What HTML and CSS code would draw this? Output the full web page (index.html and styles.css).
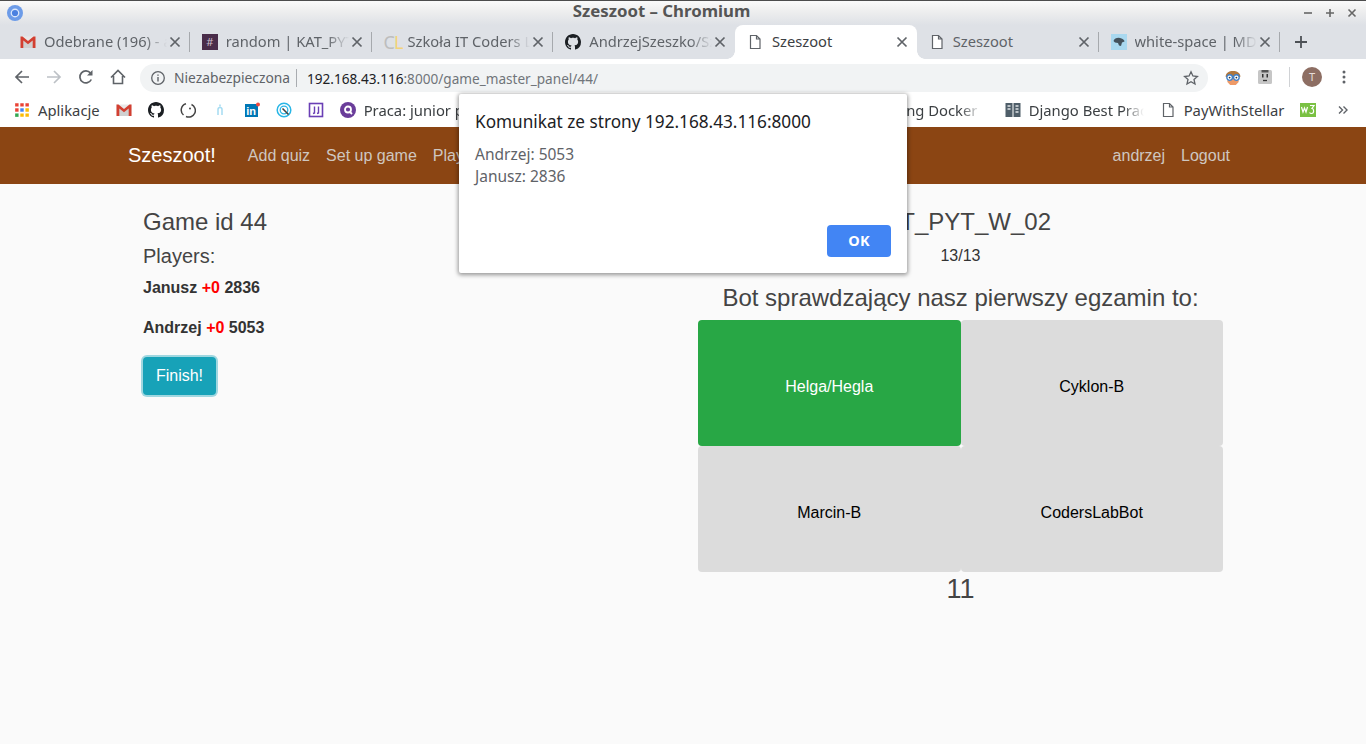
FILE: index.html
```html
<!DOCTYPE html>
<html lang="en">
<head>
  <meta charset="UTF-8">
  <title>Szeszoot - Chromium</title>
  <link rel="stylesheet" href="styles.css">
</head>
<body>
  <svg class="sprite" xmlns="http://www.w3.org/2000/svg">
    <symbol id="i-close" viewBox="0 0 16 16"><path d="M3.5 3.5l9 9M12.5 3.5l-9 9" fill="none" stroke="#5f6368" stroke-width="1.7"/></symbol>
    <symbol id="i-doc" viewBox="0 0 16 16"><path d="M3.5 1.5h6l3.5 3.5v9.5H3.5zM9.5 1.5V5H13" fill="#fff" stroke="#5f6368" stroke-width="1.2"/></symbol>
    <symbol id="i-github" viewBox="0 0 16 16"><path fill="#1b1f23" d="M8 0C3.58 0 0 3.58 0 8c0 3.54 2.29 6.53 5.47 7.59.4.07.55-.17.55-.38 0-.19-.01-.82-.01-1.49-2.01.37-2.53-.49-2.69-.94-.09-.23-.48-.94-.82-1.13-.28-.15-.68-.52-.01-.53.63-.01 1.08.58 1.23.82.72 1.21 1.87.87 2.33.66.07-.52.28-.87.51-1.07-1.78-.2-3.64-.89-3.64-3.95 0-.87.31-1.59.82-2.15-.08-.2-.36-1.02.08-2.12 0 0 .67-.21 2.2.82.64-.18 1.32-.27 2-.27.68 0 1.36.09 2 .27 1.53-1.04 2.2-.82 2.2-.82.44 1.1.16 1.92.08 2.12.51.56.82 1.27.82 2.15 0 3.07-1.87 3.75-3.65 3.95.29.25.54.73.54 1.48 0 1.07-.01 1.93-.01 2.2 0 .21.15.46.55.38A8.013 8.013 0 0016 8c0-4.42-3.58-8-8-8z"/></symbol>
    <symbol id="i-gmail" viewBox="0 0 16 16"><path fill="#e8e8e8" d="M.5 2.500h15V14H.5z"/><path fill="#d0d0d0" d="M3 14V6l5 4 5-4v8z"/><path fill="#d23f31" d="M.5 2.500h2L8 7l5.500-4.500h2V14h-2.800V6.600L8 10.300 3.300 6.600V14H.5z"/></symbol>
  </svg>

  <div class="titlebar">
    <svg class="logo" viewBox="0 0 16 16" width="16" height="16">
      <circle cx="8" cy="8" r="8" fill="#6c9be8"/>
      <circle cx="8" cy="8" r="4.400" fill="#dbe7fb"/>
      <circle cx="8" cy="8" r="3.100" fill="#4a80e0"/>
    </svg>
    <div class="window-title">Szeszoot – Chromium</div>
    <div class="window-buttons">
      <svg viewBox="0 0 10 10" width="10" height="10"><path d="M1 5h8" stroke="#666" stroke-width="1.6"/></svg>
      <svg viewBox="0 0 10 10" width="10" height="10"><path d="M1 5h8M5 1v8" stroke="#666" stroke-width="1.6"/></svg>
      <svg viewBox="0 0 10 10" width="10" height="10"><path d="M1.500 1.500l7 7M8.500 1.500l-7 7" stroke="#666" stroke-width="1.6"/></svg>
    </div>
  </div>

  <div class="tabstrip">
    <div class="tab">
      <svg class="favicon"><use href="#i-gmail"/></svg>
      <span class="tab-title">Odebrane (196) - andrzej</span>
      <svg class="tab-close"><use href="#i-close"/></svg>
    </div>
    <div class="tab">
      <span class="favicon slack">#</span>
      <span class="tab-title">random | KAT_PYT_W_02</span>
      <svg class="tab-close"><use href="#i-close"/></svg>
    </div>
    <div class="tab">
      <span class="favicon coders"><span class="cl-c">C</span><span class="cl-l">L</span></span>
      <span class="tab-title">Szkoła IT Coders Lab</span>
      <svg class="tab-close"><use href="#i-close"/></svg>
    </div>
    <div class="tab no-sep">
      <svg class="favicon"><use href="#i-github"/></svg>
      <span class="tab-title">AndrzejSzeszko/Szeszoot</span>
      <svg class="tab-close"><use href="#i-close"/></svg>
    </div>
    <div class="tab active">
      <svg class="favicon"><use href="#i-doc"/></svg>
      <span class="tab-title plain">Szeszoot</span>
      <svg class="tab-close"><use href="#i-close"/></svg>
    </div>
    <div class="tab">
      <svg class="favicon"><use href="#i-doc"/></svg>
      <span class="tab-title plain">Szeszoot</span>
      <svg class="tab-close"><use href="#i-close"/></svg>
    </div>
    <div class="tab">
      <svg class="favicon" viewBox="0 0 16 16"><rect width="16" height="16" fill="#a9d8ef"/><path d="M2.500 7c1-3 5-4 8-2.500 1.500.5 3 1.500 3 3l-2.500 1-1 3.500-2-.5-1-2.500-3-.5z" fill="#44525c"/></svg>
      <span class="tab-title">white-space | MDN web docs</span>
      <svg class="tab-close"><use href="#i-close"/></svg>
    </div>
    <svg class="new-tab" viewBox="0 0 16 16" width="16" height="16"><path d="M8 2v12M2 8h12" stroke="#4d5156" stroke-width="1.8" fill="none"/></svg>
  </div>

  <div class="toolbar">
    <button class="tool">
      <svg viewBox="0 0 16 16" width="16" height="16"><path d="M15 8H2M8 2L2 8l6 6" fill="none" stroke="#5f6368" stroke-width="1.7"/></svg>
    </button>
    <button class="tool">
      <svg viewBox="0 0 16 16" width="16" height="16"><path d="M1 8h13M8 2l6 6-6 6" fill="none" stroke="#bdc1c6" stroke-width="1.7"/></svg>
    </button>
    <button class="tool">
      <svg viewBox="0 0 16 16" width="16" height="16"><path d="M13.300 10.500A6 6 0 1 1 12.500 4" fill="none" stroke="#5f6368" stroke-width="1.7"/><path d="M14.500 1v5.500H9z" fill="#5f6368"/></svg>
    </button>
    <button class="tool">
      <svg viewBox="0 0 16 16" width="16" height="16"><path d="M1 8.500L8 1.500l7 7M3.500 7v7.500h9V7" fill="none" stroke="#5f6368" stroke-width="1.6"/></svg>
    </button>
    <div class="omnibox">
      <svg class="info" viewBox="0 0 16 16" width="16" height="16"><circle cx="8" cy="8" r="6.300" fill="none" stroke="#5f6368" stroke-width="1.300"/><path d="M8 7v4.500M8 4.500v1.300" stroke="#5f6368" stroke-width="1.400"/></svg>
      <span class="secure">Niezabezpieczona</span>
      <span class="url"><span class="host">192.168.43.116</span>:8000/game_master_panel/44/</span>
      <svg class="star" viewBox="0 0 16 16" width="16" height="16"><path d="M8 1.800l1.900 4.200 4.500.5-3.400 3 1 4.500L8 11.700 4 14l1-4.500-3.400-3 4.500-.5z" fill="none" stroke="#5f6368" stroke-width="1.300"/></svg>
    </div>
    <div class="extensions">
      <button class="tool">
        <svg viewBox="0 0 16 16" width="18" height="18">
          <path d="M3 8h10v4.500L10.500 15h-5L3 12.500z" fill="#ee9a68"/>
          <path d="M1.500 8C1 1 15 1 14.500 8z" fill="#b0763c"/>
          <circle cx="5" cy="8.500" r="2.500" fill="#fff" stroke="#3f80c9" stroke-width="1.200"/>
          <circle cx="11" cy="8.500" r="2.500" fill="#fff" stroke="#3f80c9" stroke-width="1.200"/>
          <circle cx="5" cy="8.500" r=".8" fill="#333"/>
          <circle cx="11" cy="8.500" r=".8" fill="#333"/>
        </svg>
      </button>
      <button class="tool">
        <svg viewBox="0 0 16 16" width="16" height="16">
          <rect x="1" y="1" width="14" height="14" rx="1.500" fill="#c6c6c6"/>
          <path d="M4.500 1h7v2.500h-7z" fill="#555"/>
          <path d="M5 5h1.500v3.500H5zM9.500 5H11v3.500H9.500z" fill="#333"/>
          <path d="M6 11.500h4" stroke="#333" stroke-width="1.300"/>
        </svg>
      </button>
      <span class="tool-sep"></span>
      <button class="tool avatar-btn"><span class="avatar">T</span></button>
      <button class="tool">
        <svg viewBox="0 0 16 16" width="16" height="16"><circle cx="8" cy="3" r="1.500" fill="#5f6368"/><circle cx="8" cy="8" r="1.500" fill="#5f6368"/><circle cx="8" cy="13" r="1.500" fill="#5f6368"/></svg>
      </button>
    </div>
  </div>

  <div class="bookmarks">
    <div class="bm">
      <svg viewBox="0 0 14 14" width="16" height="16">
        <path fill="#ea4335" d="M1 1h3v3H1zM5.500 1h3v3h-3zM10 1h3v3h-3z"/>
        <path fill="#4285f4" d="M5.500 5.500h3v3h-3z"/>
        <path fill="#ea4335" d="M1 5.500h3v3H1z"/>
        <path fill="#fbbc05" d="M10 5.500h3v3h-3zM5.500 10h3v3h-3zM10 10h3v3h-3z"/>
        <path fill="#34a853" d="M1 10h3v3H1z"/>
      </svg>
      <span>Aplikacje</span>
    </div>
    <div class="bm-icon"><svg width="16" height="16"><use href="#i-gmail"/></svg></div>
    <div class="bm-icon"><svg width="16" height="16"><use href="#i-github"/></svg></div>
    <div class="bm-icon">
      <svg viewBox="0 0 16 16" width="16" height="16"><path d="M6 1.800A6.500 6.500 0 0 0 3.500 13" fill="none" stroke="#444" stroke-width="1.500"/><path d="M11.500 2.500A6.500 6.500 0 0 1 6 14.500" fill="none" stroke="#444" stroke-width="1.500"/><circle cx="10" cy="6.500" r="1" fill="#444"/></svg>
    </div>
    <div class="bm-icon">
      <svg viewBox="0 0 16 16" width="16" height="16"><path d="M6 13V7.500a2 2 0 0 1 4 0V13M8 2.500v2" fill="none" stroke="#a5dcf2" stroke-width="1.500"/></svg>
    </div>
    <div class="bm-icon">
      <svg viewBox="0 0 16 16" width="16" height="16">
        <rect x="1" y="2" width="13" height="13" fill="#0077b5"/>
        <text x="2.300" y="13" class="in-text">in</text>
        <circle cx="14" cy="2.500" r="2" fill="#f0493e"/>
      </svg>
    </div>
    <div class="bm-icon">
      <svg viewBox="0 0 16 16" width="16" height="16"><circle cx="8" cy="8" r="6.800" fill="none" stroke="#29b6e6" stroke-width="1.500"/><circle cx="8" cy="8" r="3.800" fill="none" stroke="#29b6e6" stroke-width="1.300"/><path d="M6.500 6.500l6 6" stroke="#444" stroke-width="1.600"/></svg>
    </div>
    <div class="bm-icon">
      <svg viewBox="0 0 16 16" width="16" height="16"><rect x="1.500" y="1.500" width="13" height="13" fill="#fff" stroke="#6a3fb5" stroke-width="1.600"/><path d="M6.500 4.500V11l-1.500 .5M10.500 4.500V11L9 11.500" fill="none" stroke="#6a3fb5" stroke-width="1.400"/></svg>
    </div>
    <div class="bm wide">
      <svg viewBox="0 0 16 16" width="16" height="16"><circle cx="8" cy="8" r="8" fill="#6a3d9a"/><circle cx="8" cy="7.500" r="3" fill="none" stroke="#fff" stroke-width="1.800"/><path d="M10 10l2 2" stroke="#fff" stroke-width="1.800"/></svg>
      <span class="bm-label">Praca: junior python developer</span>
    </div>
    <div class="bm-gap"></div>
    <div class="bm wide docker">
      <svg width="16" height="16"><use href="#i-doc"/></svg>
      <span class="bm-label">Running Docker python app</span>
    </div>
    <div class="bm wide">
      <svg viewBox="0 0 16 16" width="16" height="16"><rect x=".5" y="1" width="15" height="14" fill="#4f5e69"/><path d="M8 1v14" stroke="#fff" stroke-width="1"/><path d="M2.500 4h3M2.500 7h3M10.500 4h3M10.500 7h3M10.500 10h3" stroke="#dfe3e6" stroke-width="1.300"/></svg>
      <span class="bm-label">Django Best Practices</span>
    </div>
    <div class="bm">
      <svg width="16" height="16"><use href="#i-doc"/></svg>
      <span>PayWithStellar</span>
    </div>
    <div class="bm-icon">
      <svg viewBox="0 0 16 16" width="16" height="16"><rect y="1" width="16" height="14" fill="#7ac143"/><path d="M1.500 5l1.500 5 1.500-4 1.500 4 1.500-5" fill="none" stroke="#fff" stroke-width="1.200"/><path d="M10 3.500h4l-2 3c2 .2 2.500 4.500-.5 5-1 .1-1.500-.3-2-1" fill="none" stroke="#fff" stroke-width="1.200"/></svg>
    </div>
    <svg class="bm-more" viewBox="0 0 10 10" width="10" height="10"><path d="M1 1.500L4.500 5 1 8.500M5.500 1.500L9 5 5.500 8.500" fill="none" stroke="#5f6368" stroke-width="1.400"/></svg>
  </div>

  <nav class="navbar">
    <a class="brand" href="#">Szeszoot!</a>
    <a class="nav-link" href="#">Add quiz</a>
    <a class="nav-link" href="#">Set up game</a>
    <a class="nav-link" href="#">Play</a>
    <a class="nav-link nav-user" href="#">andrzej</a>
    <a class="nav-link" href="#">Logout</a>
  </nav>

  <main class="content">
    <section class="players-col">
      <h3 class="game-id">Game id 44</h3>
      <h4 class="players-head">Players:</h4>
      <p class="player">Janusz <span class="delta">+0</span> 2836</p>
      <p class="player">Andrzej <span class="delta">+0</span> 5053</p>
      <button class="finish">Finish!</button>
    </section>
    <section class="quiz-col">
      <h3 class="quiz-name">KAT_PYT_W_02</h3>
      <div class="progress">13/13</div>
      <h3 class="question">Bot sprawdzający nasz pierwszy egzamin to:</h3>
      <div class="answers">
        <div class="answer correct">Helga/Hegla</div>
        <div class="answer">Cyklon-B</div>
        <div class="answer">Marcin-B</div>
        <div class="answer">CodersLabBot</div>
      </div>
      <div class="timer">11</div>
    </section>
  </main>

  <div class="dialog">
    <div class="dialog-title">Komunikat ze strony 192.168.43.116:8000</div>
    <div class="dialog-body">Andrzej: 5053<br>Janusz: 2836</div>
    <div class="dialog-actions"><button class="dialog-ok">OK</button></div>
  </div>
</body>
</html>
```

FILE: styles.css
```css
* {
  box-sizing: border-box;
}

html, body {
  margin: 0;
  height: 100%;
}

body {
  height: 744px;
  overflow: hidden;
  background: #fafafa;
  font-family: "Liberation Sans", Arial, sans-serif;
  font-size: 16px;
  color: #333;
}

.sprite {
  display: none;
}

button {
  font-family: inherit;
  border: none;
  padding: 0;
  background: none;
}

/* window title */
.titlebar {
  height: 25px;
  display: flex;
  align-items: center;
  padding-left: 7px;
  border-top: 1px solid #4c4c4c;
  background: linear-gradient(#fafafa, #f0f0f0 35%, #dee1e6);
  font-family: "Noto Sans", sans-serif;
}

.logo {
  flex: none;
}

.window-title {
  flex: 1;
  padding-bottom: 4px;
  text-align: center;
  font-size: 16.8px;
  line-height: 22px;
  font-weight: 700;
  color: #555;
}

.window-buttons {
  width: 66px;
  flex: none;
  display: flex;
  gap: 12px;
  padding-left: 3px;
}

/* tabs */
.tabstrip {
  height: 34px;
  display: flex;
  padding-left: 8px;
  background: #dee1e6;
  font-family: "Noto Sans", sans-serif;
  font-size: 14.7px;
  color: #5f6368;
}

.tab {
  position: relative;
  width: 181.75px;
  flex: none;
  display: flex;
  align-items: center;
  padding: 0 7px 0 12px;
}

.tab::after {
  content: "";
  position: absolute;
  right: 0;
  top: 7px;
  height: 20px;
  width: 1px;
  background: #a6a9ad;
}

.tab.no-sep::after {
  display: none;
}

.tab.active {
  background: #fff;
  border-radius: 8px 8px 0 0;
  color: #3c4043;
}

/* little flares at the foot of the open tab */
.tab.active::before,
.tab.active::after {
  content: "";
  position: absolute;
  top: auto;
  bottom: 0;
  width: 8px;
  height: 8px;
}

.tab.active::before {
  left: -8px;
  background: radial-gradient(circle at 0 0, transparent 7.5px, #fff 8px);
}

.tab.active::after {
  right: -8px;
  background: radial-gradient(circle at 100% 0, transparent 7.5px, #fff 8px);
}

.favicon {
  width: 16px;
  height: 16px;
  flex: none;
  margin-right: 8px;
}

.slack {
  background: #4a2d4a;
  color: #c9bcc9;
  font-size: 11px;
  line-height: 16px;
  text-align: center;
}

.coders {
  font-size: 18px;
  line-height: 16px;
  letter-spacing: -1px;
}

.cl-c {
  color: #bdbdbd;
}

.cl-l {
  color: #f2d37a;
}

.tab-title {
  flex: 1;
  min-width: 0;
  margin-bottom: 2px;
  white-space: nowrap;
  overflow: hidden;
  -webkit-mask-image: linear-gradient(to right, #000 82%, transparent);
  mask-image: linear-gradient(to right, #000 82%, transparent);
}

.tab-title.plain {
  -webkit-mask-image: none;
  mask-image: none;
}

.active .tab-title.plain {
  padding-left: 1px;
}

.tab-close {
  width: 16px;
  height: 16px;
  flex: none;
}

.new-tab {
  margin: 9px 0 0 13px;
}

/* address bar */
.toolbar {
  height: 36px;
  display: flex;
  align-items: center;
  padding: 2px 0 0 6px;
  background: #fff;
  font-family: "Noto Sans", sans-serif;
}

.tool {
  width: 32px;
  height: 28px;
  flex: none;
  margin-bottom: 2px;
  display: flex;
  align-items: center;
  justify-content: center;
}

.omnibox {
  flex: 1;
  height: 28px;
  margin-left: 6px;
  display: flex;
  align-items: center;
  padding: 0 9px 0 10px;
  border-radius: 14px;
  background: #f1f3f4;
  font-size: 13.6px;
  white-space: nowrap;
}

.info {
  margin-right: 8px;
}

.secure {
  width: 123px;
  padding-right: 6px;
  border-right: 1px solid #a9acb0;
  line-height: 18px;
  font-size: 13.8px;
  color: #5f6368;
}

.url {
  flex: 1;
  margin-left: 10px;
  color: #70757a;
}

.host {
  color: #202124;
}

.extensions {
  width: 158px;
  flex: none;
  display: flex;
  align-items: center;
  padding-left: 9px;
}

.tool-sep {
  width: 1px;
  height: 20px;
  margin: 0 6px 2px 8px;
  background: #d0d2d5;
}

.avatar {
  width: 20px;
  height: 20px;
  border-radius: 50%;
  background: #8d6e63;
  color: #e8ddd9;
  font-size: 11px;
  line-height: 20px;
  text-align: center;
}

/* bookmarks */
.bookmarks {
  height: 32px;
  display: flex;
  align-items: center;
  padding: 0 0 2px 6px;
  background: #fff;
  font-family: "Noto Sans", sans-serif;
  font-size: 14.8px;
  color: #3c4043;
  white-space: nowrap;
}

.bm {
  display: flex;
  align-items: center;
  gap: 8px;
  padding: 0 8px;
  flex: none;
}

.bm span {
  margin-bottom: 1px;
}

.bm.wide {
  width: 155px;
}

.bm.docker {
  margin-right: 8px;
}

.bm-label {
  flex: 1;
  min-width: 0;
  overflow: hidden;
  -webkit-mask-image: linear-gradient(to right, #000 82%, transparent);
  mask-image: linear-gradient(to right, #000 82%, transparent);
}

.bm-icon {
  width: 32px;
  height: 16px;
  flex: none;
  display: flex;
  justify-content: center;
}

.bm-gap {
  width: 347px;
  flex: none;
}

.bm-more {
  margin-left: 14px;
  flex: none;
}

.in-text {
  font-family: "Liberation Sans", sans-serif;
  font-size: 11px;
  font-weight: 700;
  fill: #fff;
}

/* site navbar */
.navbar {
  height: 57px;
  display: flex;
  align-items: center;
  padding: 0 128px;
  background: #8b4513;
}

.navbar a {
  text-decoration: none;
}

.brand {
  margin-right: 24px;
  font-size: 20px;
  color: #fff;
}

.nav-link {
  padding: 0 8px;
  color: #cfc7c0;
}

.nav-user {
  margin-left: auto;
}

/* page */
.content {
  display: grid;
  grid-template-columns: 1fr 1fr;
  padding: 24px 128px 0;
}

.players-col,
.quiz-col {
  padding: 0 15px;
}

.quiz-col {
  text-align: center;
}

h3, h4 {
  margin: 0;
  font-weight: 400;
  line-height: 1.2;
  color: #444;
}

h3 {
  font-size: 24px;
}

.game-id {
  margin-bottom: 7px;
}

.players-head {
  font-size: 20px;
  margin-bottom: 8px;
}

.player {
  margin: 0 0 16px;
  line-height: 24px;
  font-weight: 700;
  color: #333;
}

.delta {
  color: #f00;
}

.finish {
  display: block;
  margin-top: 17px;
  width: 73px;
  height: 38px;
  border-radius: 4px;
  background: #17a2b8;
  color: #fff;
  font-size: 16px;
  box-shadow: 0 0 0 2px rgba(23, 162, 184, 0.4);
}

.progress {
  margin-top: 7px;
  line-height: 24px;
  color: #333;
}

.question {
  margin: 16px 0 7px;
}

.answers {
  display: grid;
  grid-template-columns: 1fr 1fr;
  grid-auto-rows: 126px;
}

.answer {
  display: flex;
  align-items: center;
  justify-content: center;
  padding-top: 8px;
  border-radius: 4px;
  background: #dcdcdc;
  color: #000;
}

.answer.correct {
  background: #28a745;
  color: #fff;
}

.timer {
  font-size: 27px;
  line-height: 34px;
  color: #444;
}

/* alert box */
.dialog {
  position: absolute;
  left: 459px;
  top: 94px;
  width: 448px;
  height: 179px;
  padding: 16px;
  border-radius: 2px;
  background: #fff;
  box-shadow: 0 1px 4px 1px rgba(0, 0, 0, 0.4);
  font-family: "Noto Sans", sans-serif;
}

.dialog-title {
  font-size: 17.2px;
  line-height: 24px;
  color: #202124;
}

.dialog-body {
  margin-top: 9px;
  font-size: 15.5px;
  line-height: 22px;
  color: #5f6368;
}

.dialog-actions {
  position: absolute;
  right: 16px;
  bottom: 16px;
}

.dialog-ok {
  display: block;
  width: 64px;
  height: 32px;
  padding-bottom: 2px;
  border-radius: 4px;
  background: #4285f4;
  color: #fff;
  font-size: 14.5px;
  font-weight: 700;
  letter-spacing: 0.3px;
}
```
